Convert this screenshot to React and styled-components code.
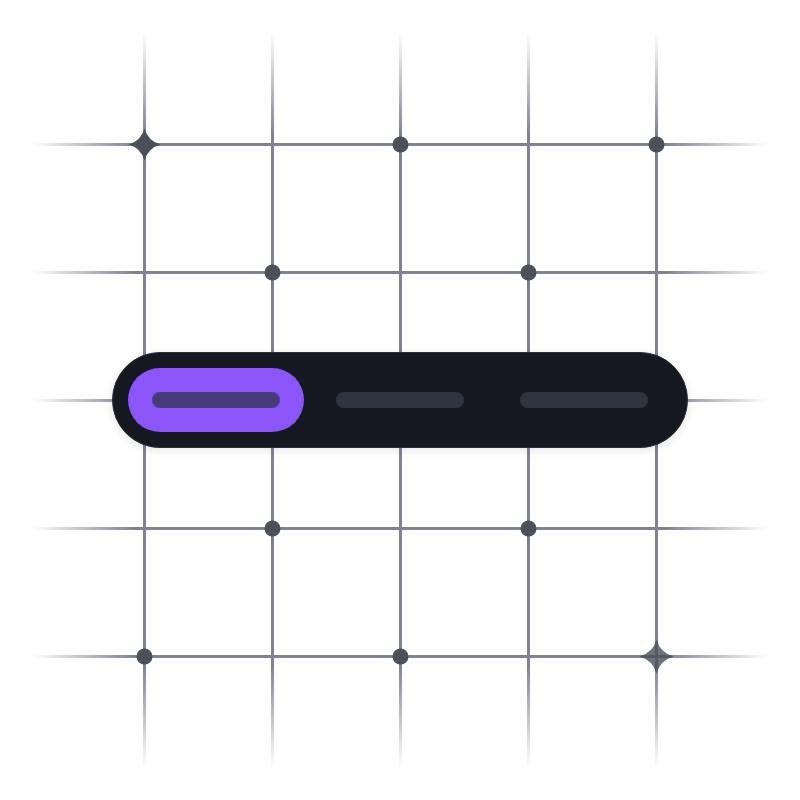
import React from 'react';
import styled, { createGlobalStyle } from 'styled-components';

const GlobalStyle = createGlobalStyle`
  html, body {
    margin: 0;
    padding: 0;
    background: #ffffff;
    font-family: "Inter", "Liberation Sans", sans-serif;
  }
`;

const Stage = styled.div`
  position: relative;
  width: 800px;
  height: 800px;
  display: flex;
  align-items: center;
  justify-content: center;
  background: #ffffff;
  overflow: hidden;
`;

const GridArt = styled.svg`
  position: absolute;
  inset: 0;
  width: 800px;
  height: 800px;
`;

const Track = styled.div`
  position: relative;
  display: flex;
  gap: 8px;
  padding: 15px;
  border-radius: 48px;
  background: #151821;
  border: 1px solid #2a2e39;
  box-shadow: 0 2px 10px rgba(17, 24, 39, 0.12);
`;

const Segment = styled.div`
  width: 176px;
  height: 64px;
  border-radius: 32px;
  display: flex;
  align-items: center;
  justify-content: center;
  background: ${(p) => (p.active ? '#8b55f7' : 'transparent')};
`;

const Bar = styled.div`
  width: 128px;
  height: 16px;
  border-radius: 8px;
  background: ${(p) => (p.active ? '#473a7c' : '#2f3441')};
`;

const stops = [144, 272, 400, 528, 656];

const dots = [
  [400, 144], [656, 144],
  [272, 272], [528, 272],
  [272, 528], [528, 528],
  [144, 656], [400, 656],
];

const sparkle = (cx, cy, r) => {
  const k = r * 0.22;
  return `M ${cx} ${cy - r}
    Q ${cx + k} ${cy - k} ${cx + r} ${cy}
    Q ${cx + k} ${cy + k} ${cx} ${cy + r}
    Q ${cx - k} ${cy + k} ${cx - r} ${cy}
    Q ${cx - k} ${cy - k} ${cx} ${cy - r} Z`;
};

const Grid = () => (
  <GridArt viewBox="0 0 800 800">
    <defs>
      <linearGradient id="fadeV" gradientUnits="userSpaceOnUse" x1="0" y1="32" x2="0" y2="768">
        <stop offset="0" stopColor="#80838e" stopOpacity="0" />
        <stop offset="0.14" stopColor="#80838e" stopOpacity="1" />
        <stop offset="0.86" stopColor="#80838e" stopOpacity="1" />
        <stop offset="1" stopColor="#80838e" stopOpacity="0" />
      </linearGradient>
      <linearGradient id="fadeH" gradientUnits="userSpaceOnUse" x1="32" y1="0" x2="768" y2="0">
        <stop offset="0" stopColor="#80838e" stopOpacity="0" />
        <stop offset="0.14" stopColor="#80838e" stopOpacity="1" />
        <stop offset="0.86" stopColor="#80838e" stopOpacity="1" />
        <stop offset="1" stopColor="#80838e" stopOpacity="0" />
      </linearGradient>
    </defs>
    {stops.map((v) => (
      <rect key={'v' + v} x={v - 1} y="32" width="3" height="736" fill="url(#fadeV)" />
    ))}
    {stops.map((h) => (
      <rect key={'h' + h} x="32" y={h - 1} width="736" height="3" fill="url(#fadeH)" />
    ))}
    {dots.map(([x, y]) => (
      <circle key={x + '-' + y} cx={x + 0.5} cy={y + 0.5} r="8" fill="#4b505b" />
    ))}
    <path d={sparkle(144.5, 144.5, 16)} fill="#4a4f5a" />
    <path d={sparkle(656.5, 656.5, 17)} fill="#4a4f5a" opacity="0.8" />
  </GridArt>
);

const App = () => {
  return (
    <>
      <GlobalStyle />
      <Stage>
        <Grid />
        <Track>
          <Segment active>
            <Bar active />
          </Segment>
          <Segment>
            <Bar />
          </Segment>
          <Segment>
            <Bar />
          </Segment>
        </Track>
      </Stage>
    </>
  );
};

export default App;
